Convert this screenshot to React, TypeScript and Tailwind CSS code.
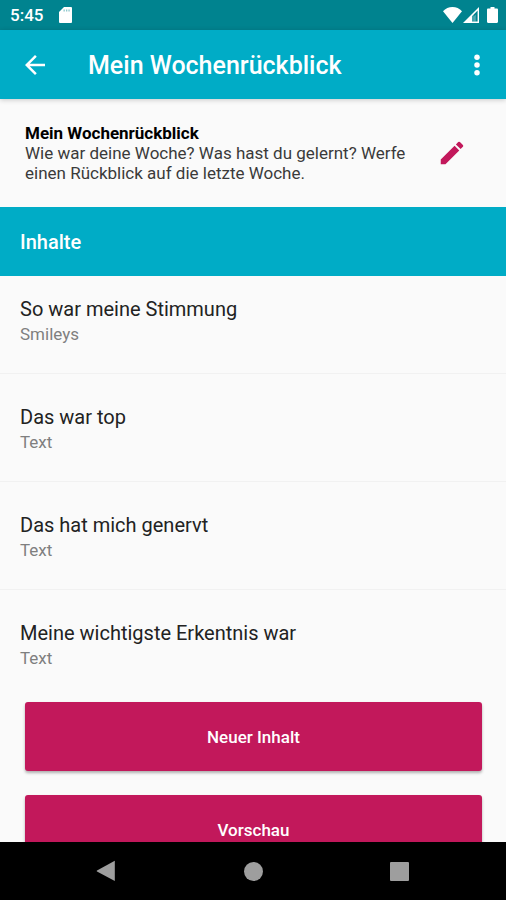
import React from 'react';

interface ContentItem {
  id: number;
  title: string;
  type: string;
}

const contents: ContentItem[] = [
  { id: 1, title: 'So war meine Stimmung', type: 'Smileys' },
  { id: 2, title: 'Das war top', type: 'Text' },
  { id: 3, title: 'Das hat mich genervt', type: 'Text' },
  { id: 4, title: 'Meine wichtigste Erkentnis war', type: 'Text' },
];

const StatusBar = () => (
  <div className="flex h-[30px] shrink-0 items-center justify-between bg-[#00838f] pl-[10px] pr-2 text-white">
    <div className="flex items-center gap-4">
      <span className="text-[17px] leading-5 font-medium">5:45</span>
      <svg className="h-4 w-[13px]" viewBox="0 0 13 16" fill="currentColor">
        <path d="M5 0h7a1 1 0 0 1 1 1v14a1 1 0 0 1-1 1H1a1 1 0 0 1-1-1V5z" />
        <path d="M4.500 2.600h1.300v2H4.500zM7 2.400h1.300v2.200H7zM9.400 2.400h1.300v2.200H9.400z" fill="#00838f" opacity="0.45" />
      </svg>
    </div>
    <div className="flex items-center">
      <svg className="h-4 w-[19px]" viewBox="0 0 19 16" fill="currentColor">
        <path d="M9.500 16L0 4.200C2.500 1.600 5.800 0 9.500 0s7 1.600 9.500 4.200z" />
      </svg>
      <svg className="ml-px h-4 w-4" viewBox="0 0 16 16" fill="currentColor">
        <path fillRule="evenodd" d="M16 0v16H0zM14.600 3.600L9 9.200v5.400h5.600z" />
        <path d="M9 9.200L10.600 7.600v7H9z" opacity="0.25" />
        <path d="M10.600 14.600V9.700L12.800 7.600v7z" opacity="0.3" />
      </svg>
      <svg className="ml-2 h-4 w-[11px]" viewBox="0 0 11 16" fill="currentColor">
        <path d="M3.500 0h4v1.600h2.300c.7 0 1.200.5 1.200 1.200v12c0 .7-.5 1.200-1.200 1.200H1.200C.5 16 0 15.500 0 14.800v-12c0-.7.5-1.200 1.200-1.200h2.300z" />
      </svg>
    </div>
  </div>
);

const AppBar = () => (
  <header className="relative z-10 flex h-[69px] shrink-0 items-center bg-[#00acc6] px-5 text-white shadow-[0_1px_5px_rgba(0,0,0,0.2)]">
    <button type="button" aria-label="Zurück" className="flex h-[30px] w-[30px] items-center justify-center">
      <svg className="h-[30px] w-[30px]" viewBox="0 0 24 24" fill="currentColor">
        <path d="M20 11H7.830l5.590-5.590L12 4l-8 8 8 8 1.410-1.410L7.830 13H20z" />
      </svg>
    </button>
    <h1 className="ml-[38px] flex-1 pt-[2px] text-[25px] leading-8 font-medium">Mein Wochenrückblick</h1>
    <button type="button" aria-label="Menü" className="-mr-[6px] flex h-[30px] w-[30px] items-center justify-center">
      <svg className="h-[30px] w-[30px]" viewBox="0 0 24 24" fill="currentColor">
        <circle cx="12" cy="5.800" r="2.200" />
        <circle cx="12" cy="12" r="2.200" />
        <circle cx="12" cy="18.200" r="2.200" />
      </svg>
    </button>
  </header>
);

const Intro = () => (
  <section className="flex h-[108px] shrink-0 items-center pr-[39px] pl-[25px]">
    <div className="flex-1 text-[17px] leading-5 text-[#3a3a3a]">
      <h2 className="font-bold text-black">Mein Wochenrückblick</h2>
      <p>Wie war deine Woche? Was hast du gelernt? Werfe einen Rückblick auf die letzte Woche.</p>
    </div>
    <button type="button" aria-label="Bearbeiten" className="ml-4 flex h-[30px] w-[30px] items-center justify-center text-[#c2185b]">
      <svg className="h-[30px] w-[30px]" viewBox="0 0 24 24" fill="currentColor">
        <path d="M3 17.250V21h3.750L17.810 9.940l-3.750-3.750zM20.710 7.040a1 1 0 0 0 0-1.410l-2.340-2.340a1 1 0 0 0-1.410 0l-1.830 1.830 3.750 3.750z" />
      </svg>
    </button>
  </section>
);

const ContentRow: React.FC<{ item: ContentItem }> = ({ item }) => (
  <li className="h-[108px] border-b border-[#f1f1f1] px-5 pt-[31px] first:h-[98px] first:pt-[21px] last:border-b-0">
    <p className="text-[20px] leading-6 text-[#222222]">{item.title}</p>
    <p className="pt-px text-[17px] leading-6 text-[#7f7f7f]">{item.type}</p>
  </li>
);

const ActionButton: React.FC<{ label: string }> = ({ label }) => (
  <button
    type="button"
    className="h-[69px] w-full shrink-0 rounded-[3px] bg-[#c2185b] text-[17px] leading-5 font-medium text-white shadow-[0_2px_3px_rgba(0,0,0,0.3)]"
  >
    {label}
  </button>
);

const NavBar = () => (
  <nav className="flex h-[58px] shrink-0 items-center justify-center gap-[116px] bg-black text-[#9e9e9e]">
    <button type="button" aria-label="Zurück" className="flex w-[30px] justify-center">
      <svg className="h-[22px] w-[22px]" viewBox="0 0 22 22" fill="currentColor">
        <path d="M18.800 0.800v20.200L1 11.400a.6.600 0 0 1 0-1z" />
      </svg>
    </button>
    <button type="button" aria-label="Startseite" className="flex w-[30px] justify-center">
      <span className="h-[19px] w-[19px] rounded-full bg-[#9e9e9e]" />
    </button>
    <button type="button" aria-label="Übersicht" className="flex w-[30px] justify-center">
      <span className="h-[19px] w-[19px] rounded-[1px] bg-[#9e9e9e]" />
    </button>
  </nav>
);

const App: React.FC = () => {
  return (
    <div className="flex h-screen flex-col overflow-hidden bg-[#fafafa] font-[Roboto,sans-serif]">
      <StatusBar />
      <AppBar />
      <main className="flex min-h-0 flex-1 flex-col overflow-hidden">
        <Intro />
        <h2 className="flex h-[69px] shrink-0 items-center bg-[#00acc6] px-5 text-[20px] leading-6 font-medium text-white">Inhalte</h2>
        <ul className="shrink-0">
          {contents.map((item) => (
            <ContentRow key={item.id} item={item} />
          ))}
        </ul>
        <div className="flex shrink-0 flex-col gap-6 pt-1 pr-6 pl-[25px]">
          <ActionButton label="Neuer Inhalt" />
          <ActionButton label="Vorschau" />
        </div>
      </main>
      <NavBar />
    </div>
  );
};

export default App;
